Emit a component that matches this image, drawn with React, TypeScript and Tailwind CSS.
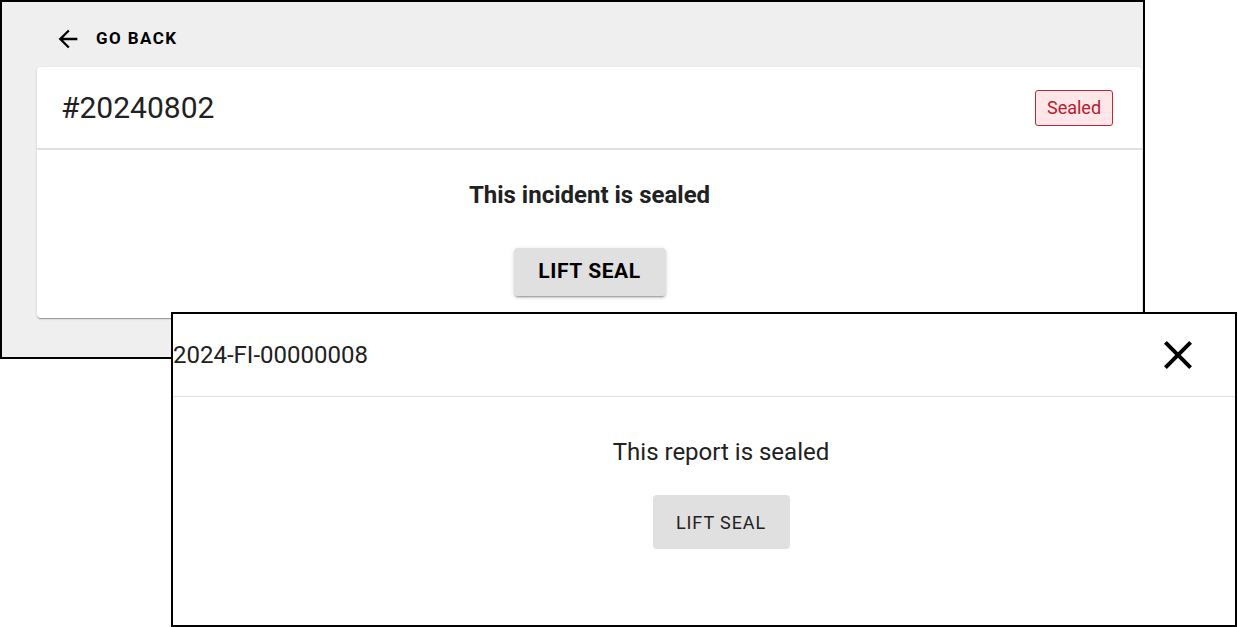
const ArrowBack = () => (
  <svg viewBox="0 0 24 24" className="w-[28px] h-[28px]" fill="currentColor">
    <path d="M20 11H7.83l5.59-5.59L12 4l-8 8 8 8 1.41-1.41L7.83 13H20v-2z" />
  </svg>
);

const CloseIcon = () => (
  <svg viewBox="0 0 24 24" className="w-[48px] h-[48px]" fill="currentColor">
    <path d="M19 6.41 17.59 5 12 10.59 6.41 5 5 6.41 10.59 12 5 17.59 6.41 19 12 13.41 17.59 19 19 17.59 13.41 12z" />
  </svg>
);

export default function App() {
  return (
    <div className="relative w-[1238px] h-[627px] bg-white overflow-hidden font-['Roboto',sans-serif] text-[#212121]">
      {/* Incident page */}
      <div className="absolute left-0 top-0 w-[1145px] h-[359px] border-2 border-black bg-[#efefef] overflow-hidden flex flex-col pl-[35px]">
        <div className="h-[65px] pt-[9px] flex items-center pl-[17px] gap-[14px] text-black">
          <ArrowBack />
          <span className="text-[17px] font-bold tracking-[1.4px] uppercase">Go back</span>
        </div>

        <div className="w-[1105px] bg-white rounded-[4px] shadow-[0_2px_1px_-1px_rgba(0,0,0,0.2),0_1px_1px_0_rgba(0,0,0,0.14),0_1px_3px_0_rgba(0,0,0,0.12)]">
          <div className="h-[83px] flex items-center justify-between pl-[24px] pr-[29px] border-b-2 border-[#e0e0e0]">
            <h1 className="text-[30px] leading-none">#20240802</h1>
            <span className="w-[78px] h-[36px] flex items-center justify-center rounded-[3px] border border-[#c0263a] bg-[#ffe6e8] text-[#b3202f] text-[18px]">
              Sealed
            </span>
          </div>
          <div className="flex flex-col items-center pt-[31px] pb-[22px]">
            <p className="text-[24px] leading-[28px] font-bold">This incident is sealed</p>
            <button className="mt-[39px] w-[152px] h-[48px] rounded-[4px] bg-[#e0e0e0] text-black text-[21px] font-bold tracking-[0.6px] shadow-[0_3px_1px_-2px_rgba(0,0,0,0.2),0_2px_2px_0_rgba(0,0,0,0.14),0_1px_5px_0_rgba(0,0,0,0.12)]">
              LIFT SEAL
            </button>
          </div>
        </div>
      </div>

      {/* Report dialog */}
      <div className="absolute left-[171px] top-[312px] w-[1066px] h-[315px] border-2 border-black bg-white flex flex-col">
        <div className="h-[83px] shrink-0 flex items-center justify-between pr-[33px] border-b border-[#e0e0e0]">
          <span className="text-[24px]">2024-FI-00000008</span>
          <button className="text-black">
            <CloseIcon />
          </button>
        </div>
        <div className="flex flex-col items-center pt-[39px] pl-[34px]">
          <p className="text-[24px] leading-[32px]">This report is sealed</p>
          <button className="mt-[27px] w-[137px] h-[54px] rounded-[4px] bg-[#e0e0e0] text-[18px] font-normal tracking-[0.9px]">
            LIFT SEAL
          </button>
        </div>
      </div>
    </div>
  );
}
